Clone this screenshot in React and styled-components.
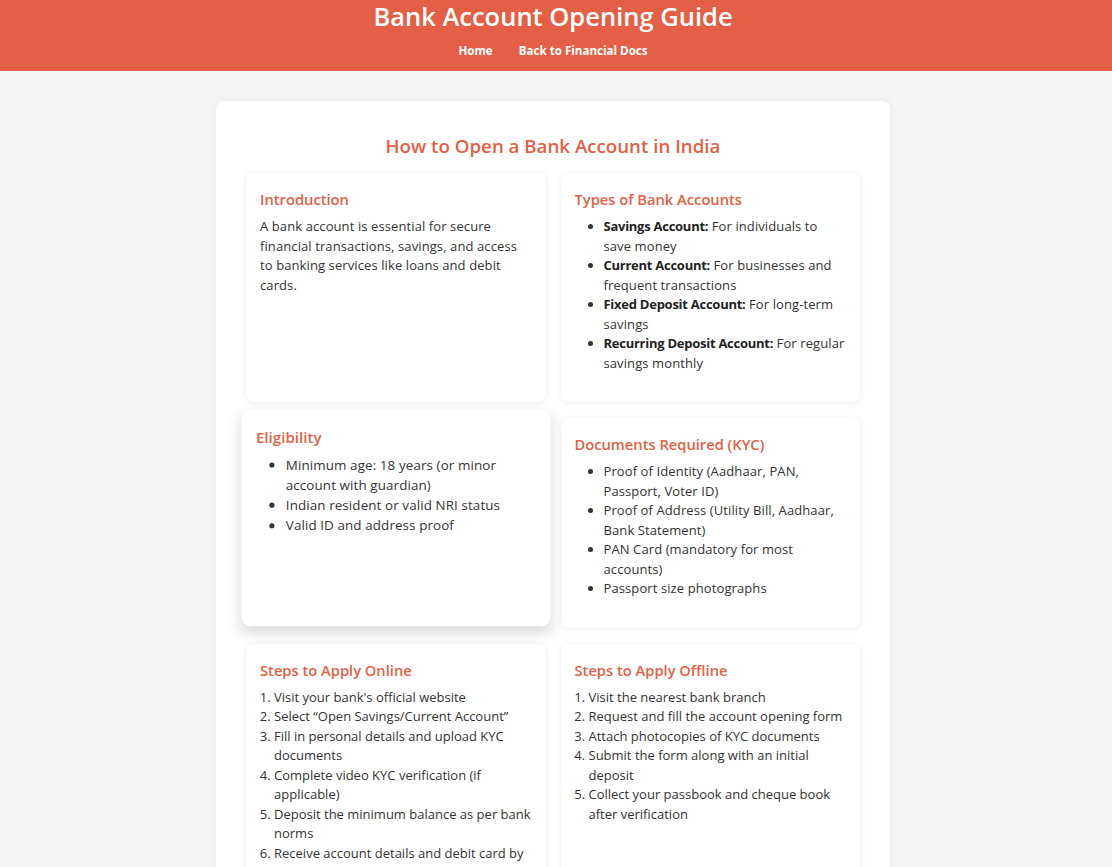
import styled, { createGlobalStyle } from "styled-components";

const accent = "#e35f45";

const GlobalStyle = createGlobalStyle`
    * { box-sizing: border-box; }
    body {
        margin: 0;
        background: #f4f4f4;
        font-family: "Open Sans", "Liberation Sans", sans-serif;
        color: #333;
    }
`;

const sections = [
    {
        title: "Introduction",
        text: "A bank account is essential for secure financial transactions, savings, and access to banking services like loans and debit cards.",
    },
    {
        title: "Types of Bank Accounts",
        bullets: [
            ["Savings Account:", "For individuals to save money"],
            ["Current Account:", "For businesses and frequent transactions"],
            ["Fixed Deposit Account:", "For long-term savings"],
            ["Recurring Deposit Account:", "For regular savings monthly"],
        ],
    },
    {
        title: "Eligibility",
        lifted: true,
        bullets: [
            [null, "Minimum age: 18 years (or minor account with guardian)"],
            [null, "Indian resident or valid NRI status"],
            [null, "Valid ID and address proof"],
        ],
    },
    {
        title: "Documents Required (KYC)",
        bullets: [
            [null, "Proof of Identity (Aadhaar, PAN, Passport, Voter ID)"],
            [null, "Proof of Address (Utility Bill, Aadhaar, Bank Statement)"],
            [null, "PAN Card (mandatory for most accounts)"],
            [null, "Passport size photographs"],
        ],
    },
    {
        title: "Steps to Apply Online",
        steps: [
            "Visit your bank's official website",
            "Select \u201COpen Savings/Current Account\u201D",
            "Fill in personal details and upload KYC documents",
            "Complete video KYC verification (if applicable)",
            "Deposit the minimum balance as per bank norms",
            "Receive account details and debit card by mail",
        ],
    },
    {
        title: "Steps to Apply Offline",
        steps: [
            "Visit the nearest bank branch",
            "Request and fill the account opening form",
            "Attach photocopies of KYC documents",
            "Submit the form along with an initial deposit",
            "Collect your passbook and cheque book after verification",
        ],
    },
];

function Section({ title, text, bullets, steps, lifted }) {
    return (
        <Card $lifted={lifted}>
            <CardTitle>{title}</CardTitle>
            {text && <Paragraph>{text}</Paragraph>}
            {bullets && (
                <BulletList>
                    {bullets.map(([label, rest], i) => (
                        <li key={i}>
                            {label && <strong>{label}</strong>}
                            {label ? " " : ""}
                            {rest}
                        </li>
                    ))}
                </BulletList>
            )}
            {steps && (
                <StepList>
                    {steps.map((s, i) => (
                        <li key={i}>{s}</li>
                    ))}
                </StepList>
            )}
        </Card>
    );
}

export default function App() {
    return (
        <Page>
            <GlobalStyle />
            <Header>
                <h1>Bank Account Opening Guide</h1>
                <Nav>
                    <a href="#home">Home</a>
                    <a href="#docs">Back to Financial Docs</a>
                </Nav>
            </Header>
            <Container>
                <PageTitle>How to Open a Bank Account in India</PageTitle>
                <Grid>
                    {sections.map((s) => (
                        <Section key={s.title} {...s} />
                    ))}
                </Grid>
            </Container>
        </Page>
    );
}

const Page = styled.div`
    padding-right: 6px;
    background: linear-gradient(${accent}, ${accent}) top / 100% 71px no-repeat;
    overflow: hidden;
`;

const Header = styled.header`
    background: ${accent};
    color: #fff;
    text-align: center;
    padding: 1px 0 10px;
    h1 {
        margin: 0;
        font-size: 25.5px;
        line-height: 30px;
        font-weight: 600;
    }
`;

const Nav = styled.nav`
    margin-top: 10px;
    display: flex;
    justify-content: center;
    gap: 26px;
    a {
        color: #fff;
        text-decoration: none;
        font-size: 11.6px;
        line-height: 20px;
        font-weight: 700;
    }
`;

const Container = styled.main`
    width: 674px;
    margin: 30px auto;
    padding: 30px;
    background: #fff;
    border-radius: 8px;
    box-shadow: 0 0 8px rgba(0, 0, 0, 0.05);
`;

const PageTitle = styled.h2`
    margin: 0 0 12px;
    text-align: center;
    color: ${accent};
    font-size: 18.7px;
    line-height: 30px;
    font-weight: 600;
`;

const Grid = styled.div`
    display: grid;
    grid-template-columns: 1fr 1fr;
    gap: 16px 15px;
`;

const Card = styled.section`
    background: #fff;
    border-radius: 8px;
    padding: 15px 14px 16px;
    box-shadow: ${(p) =>
        p.$lifted ? "0 6px 14px rgba(0, 0, 0, 0.16)" : "0 1px 6px rgba(0, 0, 0, 0.08)"};
    transform: ${(p) => (p.$lifted ? "translateY(-5px) scale(1.03)" : "none")};
`;

const CardTitle = styled.h3`
    margin: 0 0 7px;
    color: ${accent};
    font-size: 14.7px;
    line-height: 22px;
    font-weight: 600;
`;

const Paragraph = styled.p`
    margin: 0 0 13px;
    font-size: 13px;
    line-height: 19.5px;
    letter-spacing: 0.1px;
`;

const BulletList = styled.ul`
    margin: 0 0 13px;
    padding-left: 29px;
    font-size: 13px;
    line-height: 19.5px;
    letter-spacing: 0.1px;
    strong {
        color: #222;
        font-weight: 700;
        letter-spacing: -0.26px;
    }
`;

const StepList = styled.ol`
    margin: 0 0 13px;
    padding-left: 14px;
    font-size: 13px;
    line-height: 19.5px;
`;
